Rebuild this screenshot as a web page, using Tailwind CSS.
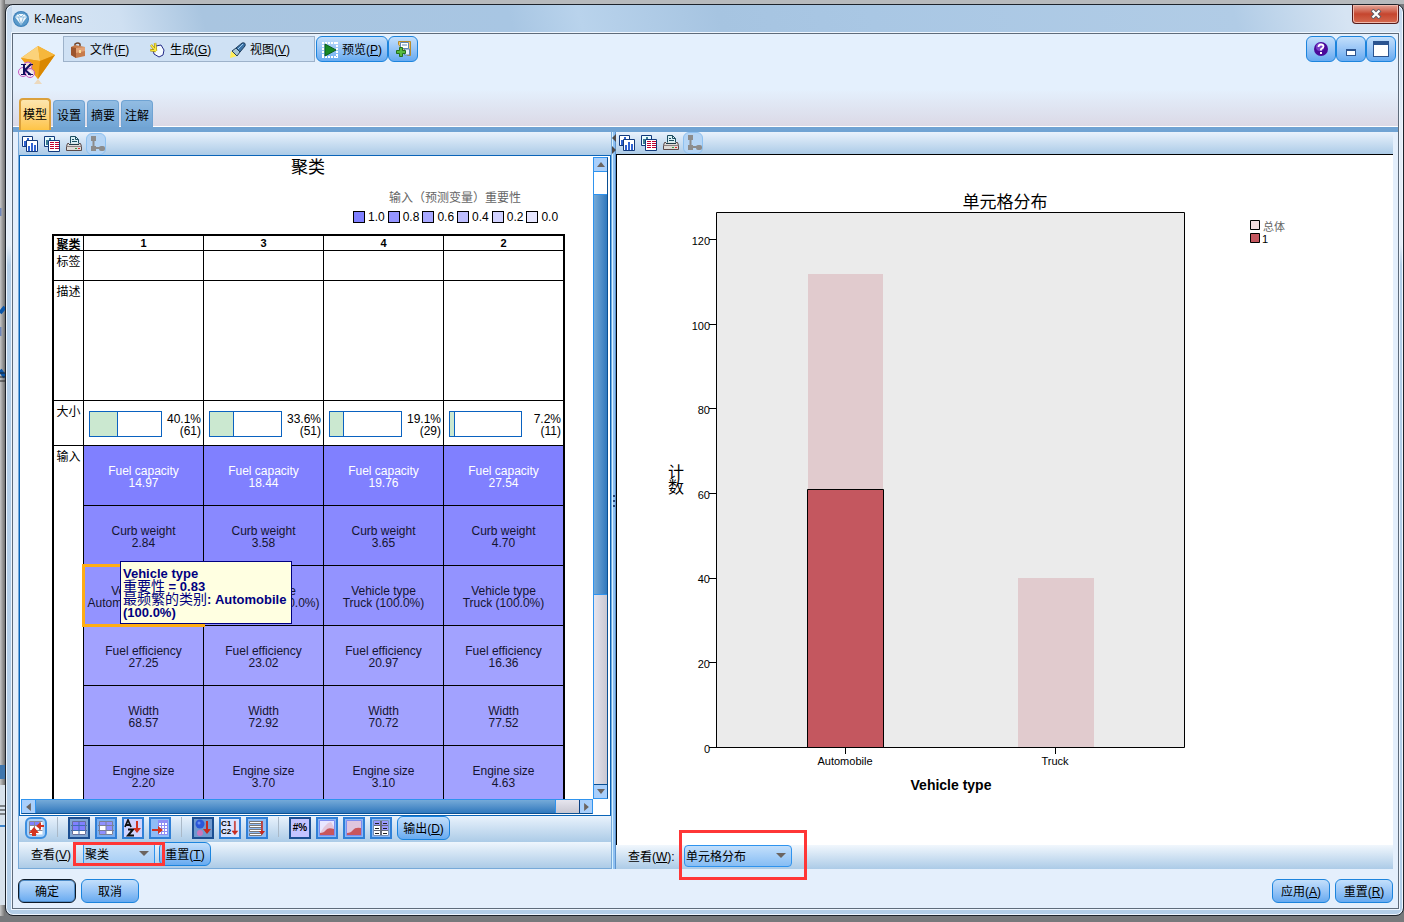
<!DOCTYPE html>
<html lang="zh-CN">
<head>
<meta charset="utf-8">
<title>K-Means</title>
<script src="https://cdn.jsdelivr.net/npm/@tailwindcss/browser@4"></script>
</head>
<body class="h-screen overflow-hidden bg-[#77797c] font-['Liberation_Sans','Noto_Sans_CJK_SC',sans-serif] text-xs text-black">
<svg class="hidden">
  <symbol id="charts" viewBox="0 0 16 16"><path d="M.5.5h10v10H.5z" fill="#fff" stroke="#123a7c"/><path d="M2 5h2v5H2zM5 2h2v3H5z" fill="#2f62d0"/><path d="M4.500 4.500h11v11h-11z" fill="#fff" stroke="#123a7c"/><path d="M6 10h2v5H6zM9 7h2v8H9zM12 9h2v6h-2z" fill="#2f62d0"/></symbol>
  <symbol id="tables" viewBox="0 0 16 16"><path d="M.5.5h10v10H.5z" fill="#e9fbff" stroke="#123a7c"/><path d="M2 4h2v5H2zM5 2h2v3H5z" fill="#3d7f91"/><path d="M4.500 4.500h11v11h-11z" fill="#fff" stroke="#123a7c"/><path d="M6 6h4v1H6zm5 0h4v1h-4zM6 8h4v1H6zm5 0h4v1h-4zM6 10h4v1H6zm5 0h4v1h-4zM6 12h4v1H6zm5 0h4v1h-4z" fill="#c00030"/></symbol>
  <symbol id="printer" viewBox="0 0 16 16"><path d="M4.500 8.500V.5h5l3 3v5z" fill="#d9f0f5" stroke="#1e4e60"/><path d="M9.500.5v3h3M6 3.500h2M6 5.500h5" fill="none" stroke="#1e4e60"/><path d="M3 7.500H1.500l-1 3v4h15v-4l-1-3H13" fill="#dedbd8" stroke="#5a4a4a"/><path d="M3 8.500h10" stroke="#1e3b48"/><path d="M1 10.500h14" stroke="#8b8080"/><path d="M9 12h2v1H9z" fill="#3aa040"/><path d="M12 12h2v1h-2z" fill="#e03030"/></symbol>
  <symbol id="tree" viewBox="0 0 18 20"><path d="M6.500 5v9h7" fill="none" stroke="#8c8c8c" stroke-width="2"/><path d="M4 2h5v5H4zM4 12h5v5H4z" fill="#8c8c8c"/><rect x="12" y="12" width="6" height="5" rx="2" fill="#8c8c8c"/></symbol>
</svg>

<div class="flex h-full bg-[linear-gradient(180deg,#b7babd_0_4px,transparent_4px)] pb-1.5">
  <!-- strip of the desktop behind the window -->
  <div class="w-[5px] shrink-0 bg-linear-to-r from-[#c6c6c6] to-[#707070]">
    <svg class="h-full w-full" preserveAspectRatio="xMinYMin slice" aria-hidden="true"><path d="M0 208v8M0 327v9" stroke="#6f86b8" stroke-width="3"/><path d="M0 313l5-6M0 370l5 7" stroke="#0b56a8" stroke-width="4"/><path d="M0 373h5M0 377h5M0 381h5" stroke="#222"/><path d="M0 765h5v14H0z" fill="#3f76ad"/><path d="M0 785h5v120H0z" fill="#d8e2ec"/><path d="M0 806h5M0 810h5M0 814h5" stroke="#222"/><path d="M0 826h5" stroke="#3f86cd" stroke-width="2"/></svg>
  </div>

  <main class="mt-1 flex min-w-0 flex-1 flex-col rounded-lg border border-[#1d232b] bg-[linear-gradient(180deg,#c3d8ee_0,#e4eef8_120px,#e4eef8_240px,#b3cee8_260px)] pr-1 pb-1.5 pl-1.5 shadow-[inset_0_0_0_1px_#eef6ff]">
    <header class="flex h-7 shrink-0 items-start bg-[linear-gradient(75deg,#d9e7f5_0,#cfe0f2_8%,#a9c5e0_14%,#a8c6e3_36%,#b9d3ec_41%,#a6c4e1_51%,#a9c7e4_62%,#b1cce6_88%,#d6e4f3_96%)]">
      <svg class="mt-1.5 ml-px h-4 w-4" viewBox="0 0 16 16"><circle cx="8" cy="8" r="8" fill="#3c7fb8"/><circle cx="8" cy="8" r="7" fill="#5a9aca"/><path d="M2 6l3-3h6l3 3-6 8z" fill="#f1f8fd"/><path d="M2 6h12M5 3l3 3 3-3M5.500 6L8 14l2.500-8" fill="none" stroke="#7fb2d8" stroke-width=".8"/></svg>
      <h1 class="mt-1.5 ml-[5px] flex-1 font-['Open_Sans',sans-serif] text-xs leading-4">K-Means</h1>
      <button aria-label="关闭" class="flex h-[19px] w-[47px] items-center justify-center rounded-b border border-t-0 border-[#541b1b] bg-linear-to-b from-[#e2a498] via-[#c5452e] via-50% to-[#d4694f] shadow-[inset_0_0_0_1px_#f0b9ac]">
        <svg class="h-2.5 w-3" viewBox="0 0 12 10"><path d="M2 1l8 8M10 1L2 9" stroke="#5c5c66" stroke-width="4"/><path d="M2.500 1.500l7 7M9.500 1.500l-7 7" stroke="#fff" stroke-width="2.200"/></svg>
      </button>
    </header>

    <div class="flex min-h-0 flex-1 flex-col border border-[#5e6b7a] bg-[#e4effc] shadow-[0_0_0_1px_#eef6ff]">
      <!-- toolbar and tabs -->
      <div class="flex h-[93px] shrink-0 flex-col justify-between border-b border-white bg-[linear-gradient(180deg,#e4f0fd_60%,#dbd9e6)]">
        <div class="flex items-start pt-0.5 pr-0.5">
          <svg class="mt-2 ml-[5px] h-10 w-10 shrink-0" viewBox="0 0 40 40"><path d="M3 14L20 2l17 9-17 24z" fill="#f0a31c"/><path d="M3 14L20 2l2 15z" fill="#fbd27a"/><path d="M20 2l17 9-15 6z" fill="#f6b73c"/><path d="M3 14l19 3-2 18z" fill="#f2a21a"/><path d="M22 17l15-6-17 24z" fill="#d98700"/><path d="M16 40l4-5 4 5z" fill="#ecd9bd"/><g fill="#f6eef8" fill-opacity=".8" stroke="#c65ac2"><circle cx="10" cy="22" r="4"/><circle cx="5" cy="28" r="4.500"/><circle cx="12" cy="29" r="4.500"/></g><path d="M6 20v11M13 20l-6 6 6 5" fill="none" stroke="#10105e" stroke-width="2"/><path d="M3 20.500h5M3 30.500h5M11 20.500h4M10 30.500h5" stroke="#10105e"/></svg>
          <nav class="ml-[5px] flex h-[26px] w-[252px] items-center border border-[#9db2ca] bg-[#cfe1f4] pt-0.5 pl-1.5">
            <button class="flex w-20 items-center gap-1"><svg class="h-4 w-4" viewBox="0 0 16 16"><path d="M5 4V2q3-2 5 0v2" fill="none" stroke="#70442a" stroke-width="1.500"/><path d="M1 5l4-2 10 2v9l-9 2-5-3z" fill="#c77c4c"/><path d="M1 5l5 1v10l-5-3z" fill="#9d552c"/><path d="M6 6l9-1v4l-9 2z" fill="#e2a277"/><path d="M9 8h2v3H9z" fill="#f7df9a"/></svg><span>文件(<u>F</u>)</span></button>
            <button class="flex w-20 items-center gap-1"><svg class="h-4 w-4" viewBox="0 0 16 16"><path d="M6 4l5-1 3 5-1 5-4 2-5-3-1-5z" fill="#f4faff" stroke="#242a88"/><path d="M6 9L1 3M6 9L5 1M6 9L0 8" stroke="#a28b16" stroke-width="2.500"/><path d="M6 9L1 3M6 9L5 1M6 9L0 8" stroke="#ffed40" stroke-width="1.200"/></svg><span>生成(<u>G</u>)</span></button>
            <button class="flex items-center gap-1"><svg class="h-4 w-4" viewBox="0 0 16 16"><path d="M0 16l1-7 6 5z" fill="#ffee58"/><path d="M2 9l4-3 4 4-3 4z" fill="#a5c4d6" stroke="#264158"/><path d="M6 6l6-5q4-1 3 3l-5 6z" fill="#3d74a8" stroke="#1d3c5c"/><path d="M8 7l5-5" stroke="#9fcdf0"/></svg><span>视图(<u>V</u>)</span></button>
          </nav>
          <button class="ml-px flex h-[26px] w-[72px] items-center justify-center gap-1 rounded-md border border-[#1c84dd] bg-linear-to-b from-[#c3dffb] via-[#98c5f6] to-[#66aaf0] pt-0.5"><svg class="h-4 w-4" viewBox="0 0 16 16"><path d="M0 1h16M0 15h16M1 0v16M15 0v16" stroke="#fff" stroke-width="2" stroke-dasharray="2 1"/><path d="M3 2l11 6-11 6z" fill="#178a24" stroke="#0c5c1b"/></svg><span>预览(<u>P</u>)</span></button>
          <button aria-label="添加" class="flex h-[26px] w-[30px] items-center justify-center rounded-md border border-[#1c84dd] bg-linear-to-b from-[#c3dffb] via-[#98c5f6] to-[#66aaf0]"><svg class="h-4 w-4" viewBox="0 0 16 16"><path d="M3.500 3.500v-3h12v14h-3z" fill="#f2c96a" stroke="#b78a2b"/><path d="M5.500 1.500h8v6h-8z" fill="#fff" stroke="#5f86b4"/><path d="M7 4h5M9.500 8h5v6h-5z" fill="#e8f1fa" stroke="#5f86b4"/><path d="M1.500 9.500h3v-3h3v3h3v3h-3v3h-3v-3h-3z" fill="#57ba3f" stroke="#23701c"/></svg></button>
          <div class="ml-auto flex">
            <button aria-label="帮助" class="flex h-[26px] w-[30px] items-center justify-center rounded-md border border-[#1c84dd] bg-linear-to-b from-[#c3dffb] via-[#98c5f6] to-[#66aaf0]"><svg class="h-3.5 w-3.5" viewBox="0 0 14 14"><circle cx="7" cy="7" r="7" fill="#4a0a9a"/><circle cx="6" cy="5" r="4" fill="#7a40c8"/><path d="M4.500 5q0-2.500 2.500-2.500t2.500 2q0 1.300-2.500 2.700v1.300" fill="none" stroke="#fff" stroke-width="1.800"/><path d="M6 10h2v2H6z" fill="#fff"/></svg></button>
            <button aria-label="最小化" class="flex h-[26px] w-[30px] items-end justify-center rounded-md border border-[#1c84dd] bg-linear-to-b from-[#c3dffb] via-[#98c5f6] to-[#66aaf0] pb-[5px]"><span class="h-[7px] w-2.5 border border-t-2 border-[#2b5490] bg-white"></span></button>
            <button aria-label="最大化" class="flex h-[26px] w-[30px] items-center justify-center rounded-md border border-[#1c84dd] bg-linear-to-b from-[#c3dffb] via-[#98c5f6] to-[#66aaf0]"><span class="h-4 w-4 border border-t-4 border-[#2b5490] bg-white"></span></button>
          </div>
        </div>
        <div class="z-10 -mb-1 flex items-end gap-0.5 pl-1.5" role="tablist">
          <button role="tab" aria-selected="true" class="h-8 w-8 rounded-t border-2 border-b-0 border-[#dba03b] bg-linear-to-b from-[#fce5ad] to-[#fec444]">模型</button>
          <button role="tab" class="mb-[3px] h-[27px] w-8 rounded-t border border-b-0 border-[#6fa3d3] bg-linear-to-b from-[#92bce2] to-[#71a5d5] pt-1">设置</button>
          <button role="tab" class="mb-[3px] h-[27px] w-8 rounded-t border border-b-0 border-[#6fa3d3] bg-linear-to-b from-[#92bce2] to-[#71a5d5] pt-1">摘要</button>
          <button role="tab" class="mb-[3px] h-[27px] w-8 rounded-t border border-b-0 border-[#6fa3d3] bg-linear-to-b from-[#92bce2] to-[#71a5d5] pt-1">注解</button>
        </div>
      </div>
      <div class="h-[5px] shrink-0 bg-[#70a3d3]"></div>

      <div class="flex min-h-0 flex-1 pr-[5px] pl-[5px]">
        <!-- cluster view -->
        <section class="flex w-[594px] shrink-0 flex-col border-x border-b border-[#77a9d8]">
          <div class="flex h-[23px] shrink-0 items-center gap-1.5 bg-linear-to-b from-[#e9f2fc] to-[#accbe7] pl-[3px]">
            <button aria-label="图表"><svg class="h-4 w-4"><use href="#charts"/></svg></button>
            <button aria-label="表格"><svg class="h-4 w-4"><use href="#tables"/></svg></button>
            <button aria-label="打印"><svg class="h-4 w-4"><use href="#printer"/></svg></button>
            <button aria-label="树" class="-ml-0.5 rounded-md border border-[#8ec1f0] bg-[#b5d5f5]"><svg class="h-5 w-[18px]"><use href="#tree"/></svg></button>
          </div>
          <div class="flex min-h-0 flex-1 flex-col border border-[#0a64b8] bg-white">
            <div class="flex min-h-0 flex-1 gap-px">
              <div class="min-w-0 flex-1 overflow-hidden">
                <h2 class="pt-px pl-1 text-center text-[17px] leading-[22px]">聚类</h2>
                <div class="mt-2.5 pl-[333px]">
                  <p class="pl-9 leading-[18px] text-[#666]">输入（预测变量）重要性</p>
                  <ul class="mt-0.5 flex gap-[3px] leading-4">
                    <li class="flex items-center gap-[3px]"><i class="h-3 w-3 border border-black bg-[#8080ff]"></i>1.0</li>
                    <li class="flex items-center gap-[3px]"><i class="h-3 w-3 border border-black bg-[#9494ff]"></i>0.8</li>
                    <li class="flex items-center gap-[3px]"><i class="h-3 w-3 border border-black bg-[#a8a8ff]"></i>0.6</li>
                    <li class="flex items-center gap-[3px]"><i class="h-3 w-3 border border-black bg-[#bebeff]"></i>0.4</li>
                    <li class="flex items-center gap-[3px]"><i class="h-3 w-3 border border-black bg-[#d2d2ff]"></i>0.2</li>
                    <li class="flex items-center gap-[3px]"><i class="h-3 w-3 border border-black bg-[#e6e6ff]"></i>0.0</li>
                  </ul>
                </div>
                <table class="mt-[9px] ml-8 w-[513px] table-fixed border-separate border-spacing-0 border-2 border-black text-center leading-3 [&_td]:border-r [&_td]:border-b [&_td]:border-black [&_td]:p-0 [&_td]:pt-0.5 [&_td:last-child]:border-r-0 [&_th]:border-r [&_th]:border-b [&_th]:border-black [&_th]:p-0 [&_th:last-child]:border-r-0">
                  <colgroup><col class="w-[30px]"><col class="w-[120px]"><col class="w-[120px]"><col class="w-[120px]"><col></colgroup>
                  <thead><tr class="h-[15px]"><th class="whitespace-nowrap"><div class="-mb-0.5 pt-0.5">聚类</div></th><th class="text-[11px]">1</th><th class="text-[11px]">3</th><th class="text-[11px]">4</th><th class="text-[11px]">2</th></tr></thead>
                  <tbody class="[&_th]:align-top [&_th]:font-normal">
                    <tr class="h-[30px]"><th><div class="pt-[5px]">标签</div></th><td></td><td></td><td></td><td></td></tr>
                    <tr class="h-[120px]"><th><div class="pt-[5px]">描述</div></th><td></td><td></td><td></td><td></td></tr>
                    <tr class="h-[45px]"><th><div class="pt-[5px]">大小</div></th>
                      <td><div class="flex items-center justify-between pr-0.5 pl-[5px]"><div class="h-[26px] w-[73px] border border-[#0a62c0]"><div class="h-full border-r border-[#0a62c0] bg-[#cbe8d0]" style="width:40.1%"></div></div><div class="pt-0.5 text-right">40.1%<br>(61)</div></div></td>
                      <td><div class="flex items-center justify-between pr-0.5 pl-[5px]"><div class="h-[26px] w-[73px] border border-[#0a62c0]"><div class="h-full border-r border-[#0a62c0] bg-[#cbe8d0]" style="width:33.6%"></div></div><div class="pt-0.5 text-right">33.6%<br>(51)</div></div></td>
                      <td><div class="flex items-center justify-between pr-0.5 pl-[5px]"><div class="h-[26px] w-[73px] border border-[#0a62c0]"><div class="h-full border-r border-[#0a62c0] bg-[#cbe8d0]" style="width:19.1%"></div></div><div class="pt-0.5 text-right">19.1%<br>(29)</div></div></td>
                      <td><div class="flex items-center justify-between pr-0.5 pl-[5px]"><div class="h-[26px] w-[73px] border border-[#0a62c0]"><div class="h-full border-r border-[#0a62c0] bg-[#cbe8d0]" style="width:7.2%"></div></div><div class="pt-0.5 text-right">7.2%<br>(11)</div></div></td></tr>
                    <tr class="h-[60px] text-white [&_td]:bg-[#8080ff]"><th rowspan="6" class="text-black"><div class="pt-[5px]">输入</div></th><td>Fuel capacity<br>14.97</td><td>Fuel capacity<br>18.44</td><td>Fuel capacity<br>19.76</td><td>Fuel capacity<br>27.54</td></tr>
                    <tr class="h-[60px] text-[#151530] [&_td]:bg-[#8989ff]"><td>Curb weight<br>2.84</td><td>Curb weight<br>3.58</td><td>Curb weight<br>3.65</td><td>Curb weight<br>4.70</td></tr>
                    <tr class="h-[60px] text-[#151530] [&_td]:bg-[#9393ff]">
                      <td class="relative whitespace-nowrap">Vehicle type<br>Automobile (100.0%)
                        <div class="absolute -inset-0.5 z-10 border-3 border-[#ffad14]"></div>
                        <div role="tooltip" class="absolute -top-[5px] left-9 z-20 w-[172px] border border-[#000080] bg-[#ffffe1] pt-[5px] pb-1 pl-0.5 text-left text-[13px] leading-[13px] font-bold whitespace-nowrap text-[#000080]"><p>Vehicle type</p><p class="h-[13px]"><span class="text-sm leading-[13px] font-normal">重要性</span> = 0.83</p><p class="h-[13px]"><span class="text-sm leading-[13px] font-normal">最频繁的类别</span>: Automobile</p><p>(100.0%)</p></div>
                      </td>
                      <td class="whitespace-nowrap">Vehicle type<br>Automobile (100.0%)</td><td>Vehicle type<br>Truck (100.0%)</td><td>Vehicle type<br>Truck (100.0%)</td></tr>
                    <tr class="h-[60px] text-[#151530] [&_td]:bg-[#a2a2ff]"><td>Fuel efficiency<br>27.25</td><td>Fuel efficiency<br>23.02</td><td>Fuel efficiency<br>20.97</td><td>Fuel efficiency<br>16.36</td></tr>
                    <tr class="h-[60px] text-[#151530] [&_td]:bg-[#a2a2ff]"><td>Width<br>68.57</td><td>Width<br>72.92</td><td>Width<br>70.72</td><td>Width<br>77.52</td></tr>
                    <tr class="h-[60px] text-[#151530] [&_td]:bg-[#a2a2ff]"><td>Engine size<br>2.20</td><td>Engine size<br>3.70</td><td>Engine size<br>3.10</td><td>Engine size<br>4.63</td></tr>
                  </tbody>
                </table>
              </div>
              <div class="mt-px mr-0.5 flex w-[15px] flex-col border border-[#2f93ee] border-r-[#0a4f92]">
                <button aria-label="向上滚动" class="flex h-3.5 items-center justify-center border-b border-[#2f93ee] bg-[#a9cffb]"><svg class="h-[5px] w-2" viewBox="0 0 10 6"><path d="M0 6l5-6 5 6z" fill="#6b6460"/></svg></button>
                <div class="h-[23px] border-b border-[#2f93ee] bg-white"></div>
                <div class="h-[400px] border-b border-[#2f93ee] bg-linear-to-r from-[#75aad8] to-[#2f78bd]"></div>
                <div class="flex-1 bg-linear-to-r from-[#e6e5ee] to-[#c8c7d2]"></div>
                <button aria-label="向下滚动" class="flex h-3.5 items-center justify-center border-t border-[#0a4f92] bg-[#a9cffb]"><svg class="h-[5px] w-2" viewBox="0 0 10 6"><path d="M0 0l5 6 5-6z" fill="#6b6460"/></svg></button>
              </div>
            </div>
            <div class="mr-[17px] mb-px ml-px flex h-[15px] shrink-0 border border-[#2f93ee] border-b-[#0a4f92]">
              <button aria-label="向左滚动" class="flex w-3.5 items-center justify-center border-r border-[#2f93ee] bg-[#a9cffb]"><svg class="h-2 w-[5px]" viewBox="0 0 6 10"><path d="M6 0L0 5l6 5z" fill="#6b6460"/></svg></button>
              <div class="flex-1 bg-linear-to-b from-[#75aad8] to-[#2f78bd]"></div>
              <div class="w-[25px] border-x border-[#2f93ee] border-r-[#0a3f82] bg-linear-to-b from-[#e6e5ee] to-[#c8c7d2]"></div>
              <button aria-label="向右滚动" class="flex w-3 items-center justify-center bg-[#a9cffb]"><svg class="h-2 w-[5px]" viewBox="0 0 6 10"><path d="M0 0l6 5-6 5z" fill="#6b6460"/></svg></button>
            </div>
          </div>

          <div class="flex h-[26px] shrink-0 items-start gap-[5px] bg-linear-to-b from-[#e9f2fc] to-[#accbe7] pt-px pl-1.5">
            <button aria-label="转置" class="flex h-[22px] w-[22px] items-center justify-center rounded-md border-2 border-[#3c8fe0] bg-[#a9d0f8]"><svg class="h-4 w-4" viewBox="0 0 16 16"><path d="M1.500 1.500h13v13h-13z" fill="#fff"/><path d="M2 2h4v3H2zM7 2h4v3H7z" fill="#8080ff"/><path d="M1.500 1.500h13M1.500 5.500h13M1.500 10.500h13M1.500 14.500h7M1.500 1.500v13M6.500 1.500v13M11.500 1.500v9" stroke="#8a8a98"/><path d="M16 7h-3v3L8 6l5-4v3h3zM4 16v-3H1l5-6 5 6H8v3z" fill="#d33320"/></svg></button>
            <i class="mx-[5px] h-5 w-px bg-[#aab9c8]"></i>
            <button aria-label="单元格" class="flex h-[22px] w-[22px] items-center justify-center border-2 border-[#1c4f92] bg-[#7fa6d4]"><svg class="h-4 w-4" viewBox="0 0 16 16"><path d="M1 1h14v14H1z" fill="#fff"/><path d="M1 1h14v9H1z" fill="#8080ff"/><path d="M0 5.500h16M0 10.500h16M8 1v14" stroke="#3e6db0"/><path d="M1.500 1.500h13v13h-13z" fill="none" stroke="#66709a"/></svg></button>
            <button aria-label="单元格排序" class="flex h-[22px] w-[22px] items-center justify-center border-2 border-[#2f7fd6] bg-[#78aef0]"><svg class="h-4 w-4" viewBox="0 0 16 16"><path d="M1 1h14v14H1z" fill="#fff"/><path d="M1 1h14v4H1zM8 5h7v6H8zM1 10h7v5H1z" fill="#9090ff"/><path d="M0 5.500h16M0 10.500h16M8 1v14M1.500 1.500h13v13h-13z" fill="none" stroke="#7a7f98"/></svg></button>
            <button aria-label="按名称排序" class="flex h-[22px] w-[22px] items-center justify-center border-2 border-[#2f7fd6] bg-[#cfd5ff]"><svg class="h-[18px] w-[18px]" viewBox="0 0 18 18"><path d="M1 8l3-7 3 7M2 6h4" fill="none" stroke="#111" stroke-width="1.800"/><path d="M4 10.500h5l-5 6h6" fill="none" stroke="#111" stroke-width="2"/><path d="M12 2h2v7h3l-4 5-4-5h3z" fill="#d33320"/></svg></button>
            <button aria-label="按数据排序" class="flex h-[22px] w-[22px] items-center justify-center border-2 border-[#2f7fd6] bg-[#90bcf5]"><svg class="h-[18px] w-[18px]" viewBox="0 0 18 18"><path d="M7 1h10v15H7z" fill="#8d8df5"/><path d="M8 4h2v2H8zm3 0h2v2h-2zm3 0h2v2h-2zM8 7h2v2H8zm3 0h2v2h-2zm3 0h2v2h-2zM8 10h2v2H8zm3 0h2v2h-2zm3 0h2v2h-2zM8 13h2v2H8zm3 0h2v2h-2zm3 0h2v2h-2z" fill="#fff"/><path d="M1 10h6V7l5 4-5 4v-3H1z" fill="#d33320"/></svg></button>
            <i class="mx-[5px] h-5 w-px bg-[#aab9c8]"></i>
            <button aria-label="按大小排序" class="flex h-[22px] w-[22px] items-center justify-center border-2 border-[#1c4f92] bg-[#6f99cf]"><svg class="h-[18px] w-[18px]" viewBox="0 0 18 18"><circle cx="6" cy="5" r="4.500" fill="#2a56d8"/><circle cx="5" cy="4" r="1.500" fill="#6a90f0"/><circle cx="6" cy="14" r="3" fill="#c878c0"/><path d="M12 2h2v8h3l-4 5-4-5h3z" fill="#c8281c"/></svg></button>
            <button aria-label="按名称排序聚类" class="flex h-[22px] w-[22px] items-center justify-between border-2 border-[#2f7fd6] bg-[#dbe4ff]"><span class="text-[8px] leading-2 font-bold">C1<br>C2</span><svg class="h-4 w-2" viewBox="0 0 8 16"><path d="M3.500 1h1v10H7l-3 4-3-4h2.500z" fill="#c8281c" stroke="#c8281c" stroke-width=".5"/></svg></button>
            <button aria-label="按标签排序" class="flex h-[22px] w-[22px] items-center justify-center border-2 border-[#2f7fd6] bg-[#90bcf5]"><svg class="h-[18px] w-[18px]" viewBox="0 0 18 18"><path d="M1.500 2.500h12v2h-12zM1.500 6.500h12v2h-12zM1.500 10.500h12v2h-12zM1.500 14.500h12v2h-12z" fill="#fff" stroke="#777"/><path d="M14 2v11" stroke="#c8281c" stroke-width="1.500"/><path d="M11 12h6l-3 4z" fill="#c8281c"/></svg></button>
            <i class="mx-[5px] h-5 w-px bg-[#aab9c8]"></i>
            <button aria-label="数值" class="h-[22px] w-[22px] border-2 border-[#1c4f92] bg-[#c4c4ff] text-[10px] leading-4 font-bold">#%</button>
            <button aria-label="绝对分布" class="flex h-[22px] w-[22px] items-center justify-center border-2 border-[#2f7fd6] bg-[#8bb8f5]"><svg class="h-4 w-4" viewBox="0 0 16 16"><path d="M.5.5h15v15H.5z" fill="#e9e6ff" stroke="#7d8cf0"/><path d="M1 13l4-6 4-4 3-1 3 5v4l-8 3z" fill="#e3c7dc"/><path d="M1 15v-2q4 0 6-3t8-1v6z" fill="#c9565c"/></svg></button>
            <button aria-label="相对分布" class="flex h-[22px] w-[22px] items-center justify-center border-2 border-[#2f7fd6] bg-[#8bb8f5]"><svg class="h-4 w-4" viewBox="0 0 16 16"><path d="M.5.5h15v15H.5z" fill="#dfc5de" stroke="#7d8cf0"/><path d="M1 15v-2q4 0 6-3t8-2v7z" fill="#c9565c"/></svg></button>
            <button aria-label="基本信息" class="flex h-[22px] w-[22px] items-center justify-center border-2 border-[#2f7fd6] bg-[#8bb8f5]"><svg class="h-4 w-4" viewBox="0 0 16 16"><path d="M.5.5h15v15H.5z" fill="#666a78"/><path d="M1 1h6v4H1zM9 1h6v4H9zM9 6h6v4H9z" fill="#9a9aff"/><path d="M1 6h6v4H1zM1 11h6v4H1zM9 11h6v4H9z" fill="#fff"/><path d="M2 3.500h4M10 3.500h4M2 8.500h4M10 8.500h4M2 13.500h4M10 13.500h4" stroke="#222"/></svg></button>
            <button class="-mt-px h-6 w-[53px] rounded-md border border-[#1c84dd] bg-linear-to-b from-[#c3dffb] via-[#98c5f6] to-[#66aaf0] pt-0.5">输出(<u>D</u>)</button>
          </div>

          <div class="flex h-[26px] shrink-0 items-start bg-linear-to-b from-[#eff6fd] to-[#accbe7] pl-3">
            <label for="left-view" class="w-[52px] pt-px leading-6 whitespace-nowrap">查看(<u>V</u>)</label>
            <div class="relative mt-[3px] mr-1">
              <select id="left-view" class="block h-[19px] w-[72px] appearance-none border-x border-[#2f93ee] bg-linear-to-b from-[#c9e1f9] to-[#a5cdf5] pl-px text-xs"><option>聚类</option></select>
              <svg class="pointer-events-none absolute top-1.5 right-1.5 h-[5px] w-2.5" viewBox="0 0 10 5"><path d="M0 0h10L5 5z" fill="#6b6460"/></svg>
              <div class="pointer-events-none absolute -top-[3px] -right-2.5 -bottom-0.5 -left-2.5 z-10 border-3 border-[#ff3636]"></div>
            </div>
            <button class="h-6 w-[52px] rounded-md border border-[#1c84dd] bg-linear-to-b from-[#c3dffb] via-[#98c5f6] to-[#66aaf0] pt-0.5">重置(<u>T</u>)</button>
          </div>
        </section>

        <!-- splitter -->
        <div class="flex w-1 shrink-0 flex-col items-center border-x border-l-[#d5f2ff] border-r-[#5d94cc] bg-[#8fc0f3]">
          <svg class="h-6 w-1 shrink-0" viewBox="0 0 4 24"><path d="M4 2v8L0 6zM0 14v8l4-4z" fill="#4e4a48"/></svg>
          <svg class="mt-[338px] h-4 w-1" viewBox="0 0 4 16"><path d="M1 1h2v2H1zM1 6h2v2H1zM1 11h2v2H1z" fill="#28477c"/></svg>
        </div>

        <!-- cell distribution -->
        <section class="flex min-w-0 flex-1 flex-col">
          <div class="flex h-[22px] shrink-0 items-center gap-1.5 bg-linear-to-b from-[#e9f2fc] to-[#accbe7] pl-[3px]">
            <button aria-label="图表"><svg class="h-4 w-4"><use href="#charts"/></svg></button>
            <button aria-label="表格"><svg class="h-4 w-4"><use href="#tables"/></svg></button>
            <button aria-label="打印"><svg class="h-4 w-4"><use href="#printer"/></svg></button>
            <button aria-label="树" class="-ml-0.5 rounded-md border border-[#8ec1f0] bg-[#b5d5f5]"><svg class="h-5 w-[18px]"><use href="#tree"/></svg></button>
          </div>
          <div class="min-h-0 flex-1 overflow-hidden border-t border-l border-black bg-white">
            <svg class="h-[690px] w-[776px]" viewBox="617 155 776 690" font-size="11">
              <text x="1005" y="208" font-size="17" text-anchor="middle">单元格分布</text>
              <path d="M716.500 212.500h468v535h-468z" fill="#ebebeb" stroke="#000"/>
              <path d="M808 274h75v473h-75zM1018 578h76v169h-76z" fill="#e1cbce"/>
              <path d="M807.500 489.500h76v258h-76z" fill="#c4575f" stroke="#000"/>
              <path d="M709 239.500h8M709 324.500h8M709 408.500h8M709 493.500h8M709 578.500h8M709 662.500h8M709 747.500h8M845.500 747v7M1055.500 747v7" stroke="#000"/>
              <g text-anchor="end"><text x="710" y="245">120</text><text x="710" y="330">100</text><text x="710" y="414">80</text><text x="710" y="499">60</text><text x="710" y="583">40</text><text x="710" y="668">20</text><text x="710" y="753">0</text></g>
              <g text-anchor="middle"><text x="845" y="765">Automobile</text><text x="1055" y="765">Truck</text><text x="951" y="790" font-size="14" font-weight="bold">Vehicle type</text><text x="676" y="478" font-size="16">计</text><text x="676" y="493" font-size="16">数</text></g>
              <path d="M1250.500 220.500h9v9h-9z" fill="#f1dadd" stroke="#000"/><path d="M1250.500 233.500h9v9h-9z" fill="#c4575f" stroke="#000"/>
              <text x="1263" y="231" fill="#666">总体</text><text x="1262" y="243">1</text>
            </svg>
          </div>
          <div class="flex h-6 shrink-0 items-start bg-linear-to-b from-[#f1f7fd] to-[#accbe7] pl-3">
            <label for="right-view" class="w-14 leading-6 whitespace-nowrap">查看(<u>W</u>):</label>
            <div class="relative">
              <select id="right-view" class="block h-[22px] w-[108px] appearance-none rounded-sm border border-[#2f93ee] bg-linear-to-b from-[#c3dffb] to-[#86bdf4] pt-px pl-px text-xs"><option>单元格分布</option></select>
              <svg class="pointer-events-none absolute top-2 right-1.5 h-[5px] w-2.5" viewBox="0 0 10 5"><path d="M0 0h10L5 5z" fill="#6b6460"/></svg>
              <div class="pointer-events-none absolute -top-[15px] -right-[15px] -bottom-[13px] -left-[5px] z-10 border-3 border-[#ff3636]"></div>
            </div>
          </div>
        </section>
      </div>

      <footer class="flex h-[39px] shrink-0 items-start gap-[5px] pt-2.5 pr-[5px] pl-[5px]">
        <button class="h-6 w-[58px] rounded-md border border-[#0d1a28] bg-linear-to-b from-[#c3dffb] via-[#98c5f6] to-[#66aaf0] pt-0.5 shadow-[inset_0_0_0_1px_#4f8cc8]">确定</button>
        <button class="h-6 w-[58px] rounded-md border border-[#1c84dd] bg-linear-to-b from-[#c3dffb] via-[#98c5f6] to-[#66aaf0] pt-0.5">取消</button>
        <button class="ml-auto h-6 w-[58px] rounded-md border border-[#1c84dd] bg-linear-to-b from-[#c3dffb] via-[#98c5f6] to-[#66aaf0] pt-0.5">应用(<u>A</u>)</button>
        <button class="h-6 w-[58px] rounded-md border border-[#1c84dd] bg-linear-to-b from-[#c3dffb] via-[#98c5f6] to-[#66aaf0] pt-0.5">重置(<u>R</u>)</button>
      </footer>
    </div>
  </main>
</div>
</body>
</html>
